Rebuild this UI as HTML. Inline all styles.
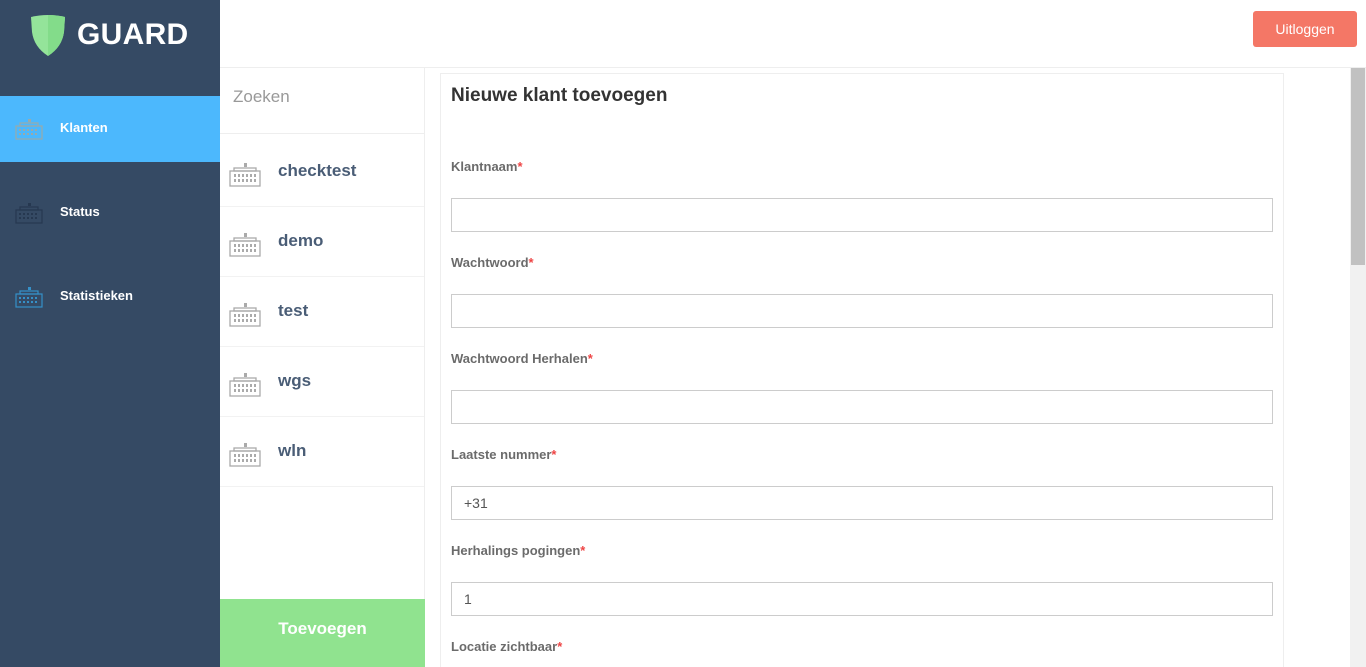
<!DOCTYPE html>
<html><head><meta charset="utf-8"><style>
*{box-sizing:border-box;margin:0;padding:0}
html,body{width:1366px;height:667px;overflow:hidden}
body{font-family:"Liberation Sans",sans-serif;background:#fff;position:relative}
.side{position:absolute;left:0;top:0;width:220px;height:667px;background:#354a64}
.logo{position:absolute;left:30px;top:14px}
.logo span{position:absolute;left:47px;top:4px;color:#fff;font-size:30px;font-weight:bold;letter-spacing:0.3px}
.nav{position:absolute;left:0;width:220px;height:66px;color:#fff;font-weight:bold;font-size:13px}
.nav .t{position:absolute;left:60px;top:24px}
.nav svg{position:absolute;left:15px;top:22px}
.top{position:absolute;left:220px;top:0;right:0;height:68px;border-bottom:1px solid #eee}
.btn{position:absolute;left:1253px;top:11px;width:104px;height:36px;background:#f47766;border-radius:3px;color:#fff;font-size:14px;text-align:center;line-height:36px}
.list{position:absolute;left:220px;top:68px;width:205px;height:599px;border-right:1px solid #eee}
.search{height:66px;border-bottom:1px solid #eee;color:#999;font-size:17px;padding:19px 0 0 13px}
.item{position:absolute;left:0;width:204px;height:70px;border-bottom:1px solid #f2f2f2}
.item span{position:absolute;left:58px;top:24px;font-size:17px;font-weight:bold;color:#4a5d76}
.item svg{position:absolute;left:9px;top:25px}
.add{position:absolute;left:220px;top:599px;width:205px;height:68px;background:#90e38f;color:#fff;font-weight:bold;font-size:17px;text-align:center;line-height:60px}
.panel{position:absolute;left:440px;top:73px;width:844px;height:594px;border:1px solid #eee;border-bottom:none}
h1{position:absolute;left:451px;top:85px;font-size:19px;font-weight:bold;color:#333}
.lbl{position:absolute;left:451px;font-size:13px;font-weight:bold;color:#6b6b6b}
.lbl b{color:#e44}
.inp{position:absolute;left:451px;width:822px;height:34px;border:1px solid #ccc;font-size:14px;color:#555;padding:8px 12px}
.sb{position:absolute;left:1350px;top:68px;width:16px;height:599px;background:#f1f1f1}
.sb div{position:absolute;left:1px;top:0;width:14px;height:197px;background:#c1c1c1}
</style></head><body>
<div class="side">
<div class="logo"><svg width="36" height="43" viewBox="0 0 36 43"><path d="M1 3Q18 -1 35 3L34 18Q32 33 18 42Q4 33 2 18Z" fill="#94e49a"/><path d="M18 1Q27 1 35 3L34 18Q32 33 18 42Z" fill="#83dc8a"/></svg><span>GUARD</span></div>
<div class="nav" style="top:96px;background:#4cb8fd"><svg width="28" height="22" viewBox="0 0 28 22"><g fill="none" stroke="#9aa" stroke-width="1.2"><rect x="1" y="8" width="26" height="13"/><rect x="5" y="5" width="18" height="3"/></g><rect x="13" y="1" width="3" height="3" fill="#9aa"/><g fill="#9aa"><rect x="4" y="11" width="2" height="2"/><rect x="8" y="11" width="2" height="2"/><rect x="12" y="11" width="2" height="2"/><rect x="16" y="11" width="2" height="2"/><rect x="20" y="11" width="2" height="2"/><rect x="4" y="15" width="2" height="2"/><rect x="8" y="15" width="2" height="2"/><rect x="12" y="15" width="2" height="2"/><rect x="16" y="15" width="2" height="2"/><rect x="20" y="15" width="2" height="2"/></g></svg><div class="t">Klanten</div></div>
<div class="nav" style="top:180px"><svg width="28" height="22" viewBox="0 0 28 22"><g fill="none" stroke="#263850" stroke-width="1.2"><rect x="1" y="8" width="26" height="13"/><rect x="5" y="5" width="18" height="3"/></g><rect x="13" y="1" width="3" height="3" fill="#263850"/><g fill="#263850"><rect x="4" y="11" width="2" height="2"/><rect x="8" y="11" width="2" height="2"/><rect x="12" y="11" width="2" height="2"/><rect x="16" y="11" width="2" height="2"/><rect x="20" y="11" width="2" height="2"/><rect x="4" y="15" width="2" height="2"/><rect x="8" y="15" width="2" height="2"/><rect x="12" y="15" width="2" height="2"/><rect x="16" y="15" width="2" height="2"/><rect x="20" y="15" width="2" height="2"/></g></svg><div class="t">Status</div></div>
<div class="nav" style="top:264px"><svg width="28" height="22" viewBox="0 0 28 22"><g fill="none" stroke="#3590c8" stroke-width="1.2"><rect x="1" y="8" width="26" height="13"/><rect x="5" y="5" width="18" height="3"/></g><rect x="13" y="1" width="3" height="3" fill="#3590c8"/><g fill="#3590c8"><rect x="4" y="11" width="2" height="2"/><rect x="8" y="11" width="2" height="2"/><rect x="12" y="11" width="2" height="2"/><rect x="16" y="11" width="2" height="2"/><rect x="20" y="11" width="2" height="2"/><rect x="4" y="15" width="2" height="2"/><rect x="8" y="15" width="2" height="2"/><rect x="12" y="15" width="2" height="2"/><rect x="16" y="15" width="2" height="2"/><rect x="20" y="15" width="2" height="2"/></g></svg><div class="t">Statistieken</div></div>
</div>
<div class="top"></div>
<div class="btn">Uitloggen</div>
<div class="list"><div class="search">Zoeken</div></div>
<svg width="0" height="0" style="position:absolute"><defs><g id="kb"><g fill="none" stroke="#aaa" stroke-width="1.3"><rect x="1" y="9" width="30" height="15"/><rect x="5" y="6" width="22" height="3"/></g><rect x="15" y="1" width="3" height="4" fill="#aaa"/><g fill="#aaa"><rect x="5" y="12" width="2" height="3"/><rect x="9" y="12" width="2" height="3"/><rect x="13" y="12" width="2" height="3"/><rect x="17" y="12" width="2" height="3"/><rect x="21" y="12" width="2" height="3"/><rect x="25" y="12" width="2" height="3"/><rect x="5" y="17" width="2" height="3"/><rect x="9" y="17" width="2" height="3"/><rect x="13" y="17" width="2" height="3"/><rect x="17" y="17" width="2" height="3"/><rect x="21" y="17" width="2" height="3"/><rect x="25" y="17" width="2" height="3"/></g></g></defs></svg>
<div class="item" style="left:220px;top:137px"><svg width="32" height="25"><use href="#kb"/></svg><span>checktest</span></div>
<div class="item" style="left:220px;top:207px"><svg width="32" height="25"><use href="#kb"/></svg><span>demo</span></div>
<div class="item" style="left:220px;top:277px"><svg width="32" height="25"><use href="#kb"/></svg><span>test</span></div>
<div class="item" style="left:220px;top:347px"><svg width="32" height="25"><use href="#kb"/></svg><span>wgs</span></div>
<div class="item" style="left:220px;top:417px"><svg width="32" height="25"><use href="#kb"/></svg><span>wln</span></div>
<div class="add">Toevoegen</div>
<div class="panel"></div>
<h1>Nieuwe klant toevoegen</h1>
<div class="lbl" style="top:159px">Klantnaam<b>*</b></div>
<div class="inp" style="top:198px"></div>
<div class="lbl" style="top:255px">Wachtwoord<b>*</b></div>
<div class="inp" style="top:294px"></div>
<div class="lbl" style="top:351px">Wachtwoord Herhalen<b>*</b></div>
<div class="inp" style="top:390px"></div>
<div class="lbl" style="top:447px">Laatste nummer<b>*</b></div>
<div class="inp" style="top:486px">+31</div>
<div class="lbl" style="top:543px">Herhalings pogingen<b>*</b></div>
<div class="inp" style="top:582px">1</div>
<div class="lbl" style="top:639px">Locatie zichtbaar<b>*</b></div>
<div class="sb"><div></div></div>
</body></html>
